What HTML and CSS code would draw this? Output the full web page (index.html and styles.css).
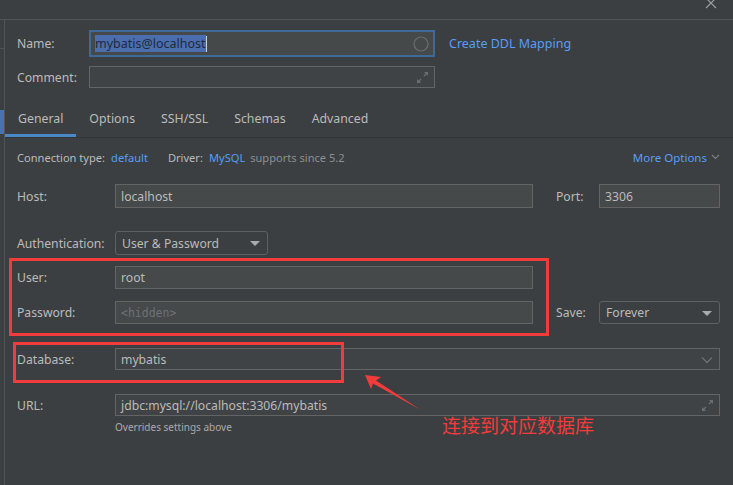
FILE: index.html
```html
<!DOCTYPE html>
<html>
<head>
<meta charset="utf-8">
<link rel="stylesheet" href="styles.css">
</head>
<body>
<div class="topbar">
  <svg class="close" width="12" height="12" viewBox="0 0 12 12"><path d="M1 0 L11 10 M11 0 L1 10" stroke="#9a9c9e" stroke-width="1.2" fill="none"/></svg>
</div>
<div class="frame">
  <div class="strip">
    <div class="strip-line"></div>
    <div class="strip-blue"></div>
  </div>
  <div class="content">
    <div class="row name-row">
      <div class="lbl short">Name:</div>
      <div class="field focus">
        <span class="sel">mybatis@localhost</span><span class="caret"></span>
        <svg class="icon-circle" width="16" height="16" viewBox="0 0 16 16"><circle cx="8" cy="8" r="7" stroke="#6b6e70" stroke-width="1.2" fill="none"/></svg>
      </div>
      <a class="link ddl">Create DDL Mapping</a>
    </div>
    <div class="row comment-row">
      <div class="lbl short">Comment:</div>
      <div class="field dim">
        <svg class="icon-expand" width="13" height="13" viewBox="0 0 13 13"><path d="M8 1 H12 V5 Z M1 8 V12 H5 Z" fill="#6b6e70"/><path d="M11 2 L8 5 M2 11 L5 8" stroke="#6b6e70" stroke-width="1.3"/></svg>
      </div>
    </div>
    <div class="tabs">
      <div class="tab active">General</div>
      <div class="tab">Options</div>
      <div class="tab">SSH/SSL</div>
      <div class="tab">Schemas</div>
      <div class="tab">Advanced</div>
    </div>
    <div class="info">
      <span>Connection type:</span><a class="link">default</a>
      <span class="drv">Driver:</span><a class="link">MySQL</a><span class="muted">supports since 5.2</span>
      <a class="link more">More Options <svg width="9" height="6" viewBox="0 0 9 6"><path d="M1 1 L4.5 4.5 L8 1" stroke="#7c7f82" stroke-width="1.2" fill="none"/></svg></a>
    </div>
    <div class="row r-host">
      <div class="lbl">Host:</div>
      <div class="field">localhost</div>
      <div class="lbl2">Port:</div>
      <div class="field small">3306</div>
    </div>
    <div class="row r-auth">
      <div class="lbl">Authentication:</div>
      <div class="combo auth">User &amp; Password<span class="tri"></span></div>
    </div>
    <div class="row r-user">
      <div class="lbl">User:</div>
      <div class="field">root</div>
      <div class="gap-right"></div>
    </div>
    <div class="row r-pass">
      <div class="lbl">Password:</div>
      <div class="field"><span class="ph">&lt;hidden&gt;</span></div>
      <div class="lbl2">Save:</div>
      <div class="combo small">Forever<span class="tri"></span></div>
    </div>
    <div class="row r-db">
      <div class="lbl">Database:</div>
      <div class="field dim">mybatis
        <svg class="icon-chev" width="12" height="8" viewBox="0 0 12 8"><path d="M1 1.5 L6 6.5 L11 1.5" stroke="#6b6e70" stroke-width="1.3" fill="none"/></svg>
      </div>
    </div>
    <div class="row r-url">
      <div class="lbl">URL:</div>
      <div class="field dim">jdbc:mysql://localhost:3306/mybatis
        <svg class="icon-expand" width="13" height="13" viewBox="0 0 13 13"><path d="M8 1 H12 V5 Z M1 8 V12 H5 Z" fill="#6b6e70"/><path d="M11 2 L8 5 M2 11 L5 8" stroke="#6b6e70" stroke-width="1.3"/></svg>
      </div>
    </div>
    <div class="hint">Overrides settings above</div>
  </div>
</div>

<div class="mark mark-auth"></div>
<div class="mark mark-db"></div>
<svg class="arrow" width="733" height="485" viewBox="0 0 733 485">
  <polygon points="365,375 381,377 376,380.5 420,409.5 373,383.5 371,389" fill="#f23b3b"/>
</svg>
<div class="note">连接到对应数据库</div>
</body>
</html>
```
FILE: styles.css
```css
* { box-sizing: border-box; }
html, body { margin: 0; padding: 0; }
body {
  width: 733px;
  height: 485px;
  overflow: hidden;
  background: #3c3f41;
  color: #bbbbbb;
  font-family: "Noto Sans", "Open Sans", sans-serif;
  font-size: 12.2px;
  position: relative;
}
.topbar {
  height: 20px;
  border-bottom: 1px solid #515457;
  display: flex;
  justify-content: flex-end;
  padding-right: 16px;
  overflow: hidden;
}
.close { margin-top: -2px; }
.frame {
  display: flex;
  height: 465px;
}
.strip {
  width: 5px;
  border-right: 1px solid #515457;
  display: flex;
  flex-direction: column;
}
.strip-line {
  height: 1px;
  margin-top: 28px;
  background: #515457;
}
.strip-blue {
  height: 24px;
  margin-top: 61px;
  background: #4a72b0;
}
.content {
  flex: 1;
  padding: 0 13px 0 12px;
  display: flex;
  flex-direction: column;
}
.row {
  display: flex;
  align-items: center;
  white-space: nowrap;
}
.lbl { width: 98px; flex: none; }
.lbl.short { width: 72px; }
.lbl2 { width: 43px; margin-left: 23px; flex: none; }
.field {
  flex: 1;
  height: 100%;
  background: #45494a;
  border: 1px solid #646464;
  display: flex;
  align-items: center;
  padding: 0 5px;
  position: relative;
  white-space: nowrap;
}
.field.dim { background: #404345; }
.field.small, .combo.small { flex: none; width: 121px; }
.field.focus {
  border: 2px solid #3d6a98;
  padding-left: 4px;
}
.sel {
  background: #4b6eaf;
  color: #1f2a3d;
  line-height: 17px;
  font-size: 12.5px;
}
.caret {
  width: 1px;
  height: 16px;
  background: #cfcfcf;
}
.icon-circle { position: absolute; right: 4px; top: 4px; }
.icon-expand { position: absolute; right: 5px; top: 4px; }
.icon-chev { position: absolute; right: 6px; top: 7px; }
.name-row { height: 27px; margin-top: 10px; }
.name-row .field, .comment-row .field { flex: none; width: 346px; }
.comment-row { height: 22px; margin-top: 9px; }
.link { color: #589df6; }
.ddl { margin-left: 14px; font-size: 12.5px; }
.tabs {
  display: flex;
  margin: 13px -13px 0 -12px;
  height: 37px;
  border-bottom: 1px solid #323436;
}
.tab {
  height: 36px;
  padding: 0 13px;
  display: flex;
  align-items: center;
  border-bottom: 3px solid transparent;
  padding-top: 1px;
  font-size: 12.3px;
}
.tab.active { border-bottom-color: #4a88c7; }
.info {
  display: flex;
  align-items: center;
  height: 18px;
  margin-top: 10px;
  font-size: 11.1px;
  white-space: nowrap;
}
.info .link { margin-left: 6px; }
.info .drv { margin-left: 20px; }
.info .muted { margin-left: 5px; color: #8c8e90; }
.info .more { margin-left: auto; display: flex; align-items: center; gap: 4px; font-size: 11.5px; }
.r-host { height: 24px; margin-top: 18px; }
.r-auth { height: 24px; margin-top: 23px; }
.r-user { height: 23px; margin-top: 11px; }
.gap-right { width: 187px; flex: none; }
.r-pass { height: 23px; margin-top: 12px; }
.r-db { height: 22px; margin-top: 24px; }
.r-url { height: 22px; margin-top: 24px; }
.combo {
  height: 100%;
  border: 1px solid #5e6163;
  border-radius: 3px;
  display: flex;
  align-items: center;
  padding: 0 6px;
  position: relative;
  background: #3c3f41;
}
.combo.auth { width: 153px; flex: none; }
.tri {
  position: absolute;
  right: 7px;
  top: 9px;
  width: 0;
  height: 0;
  border-left: 5px solid transparent;
  border-right: 5px solid transparent;
  border-top: 5px solid #a9abad;
}
.ph {
  font-family: "DejaVu Sans Mono", "Liberation Mono", monospace;
  font-size: 11.5px;
  color: #6f7173;
}
.hint {
  margin-left: 98px;
  margin-top: 4px;
  font-size: 10px;
  line-height: 14px;
  color: #a8aaac;
}
.mark {
  position: absolute;
  border: 3px solid #f23b3b;
}
.mark-auth { left: 9px; top: 258px; width: 540px; height: 78px; }
.mark-db { left: 13px; top: 342px; width: 331px; height: 41px; }
.arrow { position: absolute; left: 0; top: 0; pointer-events: none; }
.note {
  position: absolute;
  left: 442px;
  top: 413px;
  font-family: "Noto Sans CJK SC", sans-serif;
  font-size: 19px;
  line-height: 24px;
  color: #f23b3b;
}
```
